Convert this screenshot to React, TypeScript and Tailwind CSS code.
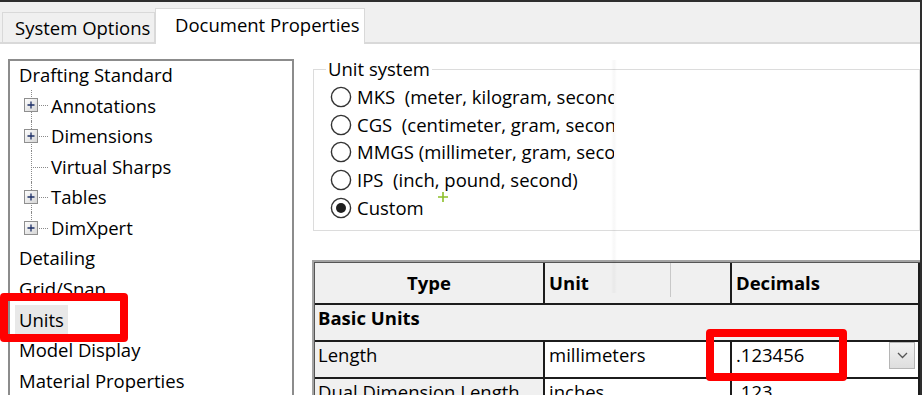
import React from "react";

type TreeItem = { t: string; lvl: 0 | 1; plus?: boolean; last?: boolean; sel?: boolean };

const tree: TreeItem[] = [
  { t: "Drafting Standard", lvl: 0 },
  { t: "Annotations", lvl: 1, plus: true },
  { t: "Dimensions", lvl: 1, plus: true },
  { t: "Virtual Sharps", lvl: 1 },
  { t: "Tables", lvl: 1, plus: true },
  { t: "DimXpert", lvl: 1, plus: true, last: true },
  { t: "Detailing", lvl: 0 },
  { t: "Grid/Snap", lvl: 0 },
  { t: "Units", lvl: 0, sel: true },
  { t: "Model Display", lvl: 0 },
  { t: "Material Properties", lvl: 0 },
];

function PlusBox() {
  return (
    <svg width="14" height="14" viewBox="0 0 14 14" className="absolute left-[5px] top-1/2 -translate-y-1/2">
      <defs>
        <linearGradient id="pg" x1="0" y1="0" x2="1" y2="1">
          <stop offset="0" stopColor="#ffffff" />
          <stop offset="1" stopColor="#d4d4d4" />
        </linearGradient>
      </defs>
      <rect x="0.5" y="0.5" width="13" height="13" fill="url(#pg)" stroke="#8f8f8f" />
      <path d="M3.5 7H10.5M7 3.5V10.5" stroke="#1d2f66" strokeWidth="1.3" />
    </svg>
  );
}

function Radio({ checked }: { checked?: boolean }) {
  return (
    <svg width="22" height="22" viewBox="0 0 22 22" className="shrink-0">
      <circle cx="11" cy="11" r="9.6" fill="#fff" stroke="#333" strokeWidth="1.4" />
      {checked && <circle cx="11" cy="11" r="5" fill="#1e1e1e" />}
    </svg>
  );
}

const radios = [
  { t: "MKS  (meter, kilogram, second)" },
  { t: "CGS  (centimeter, gram, second)" },
  { t: "MMGS (millimeter, gram, second)" },
  { t: "IPS  (inch, pound, second)" },
  { t: "Custom", checked: true },
];

export default function App() {
  return (
    <div className="relative w-[922px] h-[395px] overflow-hidden bg-white border-t-2 border-r-2 border-[#2e2e2e] font-['Open_Sans',sans-serif] text-[18.5px] text-black">
      {/* tab strip */}
      <div className="h-[42px] bg-[#f0f0f0] border-b-2 border-[#d9d9d9] flex items-end pl-[2px]">
        <div className="h-[30px] w-[153px] border border-b-0 border-[#d9d9d9] bg-[#f0f0f0] flex items-center pl-[12px] whitespace-nowrap">
          System Options
        </div>
        <div className="relative z-10 -mb-[2px] h-[36px] w-[210px] bg-white border border-b-0 border-[#d9d9d9] flex items-center pl-[19px] pb-[3px] whitespace-nowrap">
          Document Properties
        </div>
      </div>

      <div className="flex">
        {/* left tree */}
        <div className="ml-[8px] mt-[15px] w-[286px] h-[400px] shrink-0 border-2 border-[#8c8c8c] pl-[9px]">
          <div className="-mt-[1.5px]">
            {tree.map((it) =>
              it.lvl === 0 ? (
                <div key={it.t} className="h-[30.6px] flex items-center whitespace-nowrap">
                  {it.sel ? (
                    <span className="-ml-[4px] px-[4px] h-[29px] flex items-center bg-[#e8e8e8]">{it.t}</span>
                  ) : (
                    <span>{it.t}</span>
                  )}
                </div>
              ) : (
                <div key={it.t} className="h-[30.6px] flex items-center whitespace-nowrap">
                  <div className="relative w-[32px] h-full shrink-0">
                    <div
                      className={
                        "absolute left-[12px] top-0 border-l border-dotted border-[#8a8a8a] " +
                        (it.last ? "h-1/2" : "h-full")
                      }
                    />
                    <div className="absolute left-[12px] w-[17px] top-1/2 border-t border-dotted border-[#8a8a8a]" />
                    {it.plus && <PlusBox />}
                  </div>
                  <span>{it.t}</span>
                </div>
              )
            )}
          </div>
        </div>

        {/* right content */}
        <div className="relative flex-1">
          <fieldset className="ml-[19px] mt-[13px] border border-[#dcdcdc] pb-[9px]">
            <legend className="ml-[12px] px-[2px] leading-[24px]">Unit system</legend>
            <div className="w-[300px] overflow-hidden whitespace-pre pl-[16px] pt-[2px]">
              {radios.map((r) => (
                <div key={r.t} className="h-[27.7px] flex items-center gap-[5px]">
                  <Radio checked={r.checked} />
                  <span>{r.t}</span>
                </div>
              ))}
            </div>
          </fieldset>

          {/* green cursor plus */}
          <svg width="10" height="10" viewBox="0 0 10 10" className="absolute left-[144px] top-[148px]">
            <path d="M5 0V10M0 5H10" stroke="#8cbf2a" strokeWidth="1.6" />
          </svg>

          {/* faint seam */}
          <div className="absolute left-[317px] top-[16px] w-[6px] h-[233px] bg-gradient-to-r from-transparent via-[#00000008] to-transparent" />

          {/* table */}
          <div className="ml-[18px] mt-[29px] w-[608px] border-l-2 border-t-2 border-[#a3a3a3]">
            <div className="border-l border-t border-[#555]">
              {/* header */}
              <div className="flex h-[42px] border-b-2 border-[#1c1c1c] bg-[#f0f0f0] font-bold">
                <div className="w-[230px] border-r-2 border-[#1c1c1c] flex items-center justify-center pb-[1px]">Type</div>
                <div className="w-[187px] border-r-2 border-[#1c1c1c] flex items-start">
                  <div className="w-[125px] h-full flex items-center pl-[4px] pb-[1px]">Unit</div>
                  <div className="w-px h-[34px] bg-[#c8c8c8]" />
                </div>
                <div className="w-[188px] border-r-2 border-[#1c1c1c] flex items-center pl-[4px] pb-[1px]">Decimals</div>
              </div>
              {/* Basic Units */}
              <div className="h-[37px] border-b-2 border-r-2 border-[#1c1c1c] bg-[#f0f0f0] font-bold pl-[3px] leading-[26px]">
                Basic Units
              </div>
              {/* Length */}
              <div className="flex h-[37px] border-b-2 border-[#1c1c1c] leading-[26px]">
                <div className="w-[230px] border-r-2 border-[#1c1c1c] bg-[#f0f0f0] pl-[3px]">Length</div>
                <div className="w-[187px] border-r-2 border-[#1c1c1c] bg-white pl-[4px]">millimeters</div>
                <div className="relative w-[188px] border-r-2 border-[#1c1c1c] bg-white pl-[4px]">
                  .123456
                  <div className="absolute right-[3px] top-0 w-[26px] h-[27px] border border-[#b5b5b5] bg-gradient-to-b from-[#f2f2f2] to-[#dedede] flex items-center justify-center">
                    <svg width="11" height="7" viewBox="0 0 11 7">
                      <path d="M1 1L5.5 5.5L10 1" fill="none" stroke="#555" strokeWidth="1.3" />
                    </svg>
                  </div>
                </div>
              </div>
              {/* Dual */}
              <div className="flex h-[37px] leading-[26px]">
                <div className="w-[230px] border-r-2 border-[#1c1c1c] bg-[#f0f0f0] pl-[3px] whitespace-nowrap">Dual Dimension Length</div>
                <div className="w-[187px] border-r-2 border-[#1c1c1c] bg-white pl-[4px]">inches</div>
                <div className="w-[188px] border-r-2 border-[#1c1c1c] bg-white pl-[4px]">.123</div>
              </div>
            </div>
          </div>
        </div>
      </div>

      {/* red annotation boxes */}
      <div className="absolute left-0 top-[291px] w-[128px] h-[49px] border-[8px] border-[#ff0000] rounded-[4px]" />
      <div className="absolute left-[706px] top-[327px] w-[141px] h-[52px] border-[8px] border-[#ff0000] rounded-[4px]" />
    </div>
  );
}
